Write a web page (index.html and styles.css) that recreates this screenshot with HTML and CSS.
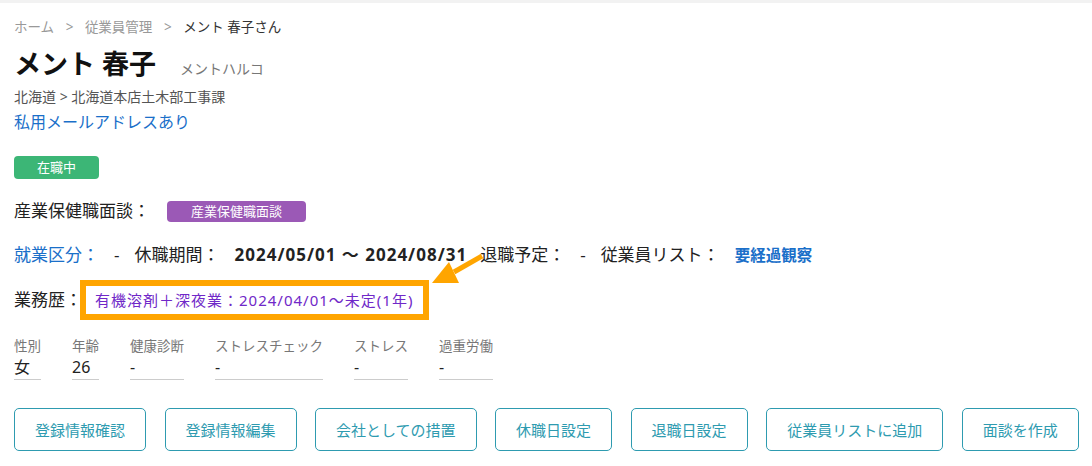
FILE: index.html
```html
<!DOCTYPE HTML>
<html>
    <head>
        <title>メント 春子さん</title>
        <link rel="stylesheet" href="styles.css">
    </head>
    <body>
        <div class="page">
            <div class="breadcrumb">
                <a href="#">ホーム</a>
                <span class="sep">&gt;</span>
                <a href="#">従業員管理</a>
                <span class="sep">&gt;</span>
                <span class="current">メント 春子さん</span>
            </div>

            <div class="name-row">
                <h1>メント 春子</h1>
                <span class="kana">メントハルコ</span>
            </div>
            <div class="org">北海道 &gt; 北海道本店土木部工事課</div>
            <a class="mail" href="#">私用メールアドレスあり</a>

            <div class="status"><span class="badge green">在職中</span></div>

            <div class="line">
                <span>産業保健職面談：</span>
                <span class="badge purple">産業保健職面談</span>
            </div>

            <div class="line info">
                <a href="#">就業区分：</a>
                <span>-</span>
                <span>休職期間：</span>
                <b class="period">2024/05/01 ～ 2024/08/31</b>
                <span>退職予定：</span>
                <span>-</span>
                <span>従業員リスト：</span>
                <b class="blue">要経過観察</b>
            </div>

            <div class="line history">
                <span>業務歴：</span>
                <span class="highlight">有機溶剤＋深夜業：2024/04/01～未定(1年)</span>
                <svg class="arrow" width="64" height="40" viewBox="0 0 64 40">
                    <line x1="58" y1="4" x2="30" y2="20" stroke="#ffa500" stroke-width="5"/>
                    <polygon points="8,31 25,10 35,31" fill="#ffa500"/>
                </svg>
            </div>

            <div class="stats">
                <div class="stat"><div class="label">性別</div><div class="value">女</div></div>
                <div class="stat"><div class="label">年齢</div><div class="value">26</div></div>
                <div class="stat"><div class="label">健康診断</div><div class="value">-</div></div>
                <div class="stat"><div class="label">ストレスチェック</div><div class="value">-</div></div>
                <div class="stat"><div class="label">ストレス</div><div class="value">-</div></div>
                <div class="stat"><div class="label">過重労働</div><div class="value">-</div></div>
            </div>

            <div class="actions">
                <button>登録情報確認</button>
                <button>登録情報編集</button>
                <button>会社としての措置</button>
                <button>休職日設定</button>
                <button>退職日設定</button>
                <button>従業員リストに追加</button>
                <button>面談を作成</button>
            </div>
        </div>
    </body>
</html>
```

FILE: styles.css
```css
body {
    margin: 0;
    font-family: "Noto Sans", "Noto Sans CJK JP", sans-serif;
    color: #222;
    background-color: white;
    border-top: 3px solid #f2f2f2;
}
.page {
    padding: 0 14px;
}
a {
    text-decoration: none;
}
.breadcrumb {
    font-size: 13.5px;
    line-height: 20px;
    padding-top: 14px;
    color: #999;
}
.breadcrumb a {
    color: #999;
}
.breadcrumb .sep {
    margin: 0 8px;
}
.breadcrumb .current {
    color: #333;
}
.name-row {
    display: flex;
    align-items: baseline;
    margin-top: 9px;
}
h1 {
    margin: 0;
    font-size: 27px;
    line-height: 36px;
    font-weight: bold;
    color: #111;
}
.kana {
    margin-left: 24px;
    font-size: 14px;
    color: #777;
}
.org {
    margin-top: 6px;
    font-size: 14px;
    line-height: 18px;
    color: #555;
}
.mail {
    display: block;
    margin-top: 5px;
    font-size: 16px;
    line-height: 22px;
    color: #1a6fc9;
}
.status {
    margin-top: 23px;
    display: flex;
}
.badge {
    display: inline-block;
    color: white;
    font-size: 13px;
    line-height: 23px;
    border-radius: 4px;
    text-align: center;
}
.green {
    background-color: #3cb676;
    width: 85px;
}
.purple {
    background-color: #9b59b6;
    width: 139px;
    line-height: 21px;
}
.line {
    display: flex;
    align-items: center;
    font-size: 17px;
    line-height: 22px;
}
.status + .line {
    margin-top: 21px;
}
.line .badge {
    margin-left: 17px;
}
.info {
    margin-top: 22px;
    gap: 15px;
}
.info a {
    color: #1a6fc9;
}
.period {
    letter-spacing: 1px;
    margin-right: -2px;
}
.blue {
    color: #1a6fc9;
    font-size: 15.5px;
}
.history {
    position: relative;
    margin-top: 14px;
}
.highlight {
    margin-left: -2px;
    border: 6px solid #ffa500;
    padding: 3px 10px 3px 9px;
    font-size: 15px;
    letter-spacing: 1px;
    line-height: 22px;
    color: #7028c8;
}
.arrow {
    position: absolute;
    left: 410px;
    top: -28px;
}
.stats {
    display: flex;
    gap: 31px;
    margin-top: 16px;
}
.stat .label {
    font-size: 13.5px;
    line-height: 20px;
    color: #777;
}
.stat .value {
    font-size: 16px;
    line-height: 23px;
    border-bottom: 1px solid #ccc;
}
.actions {
    display: flex;
    gap: 18.5px;
    margin-top: 28px;
}
.actions button {
    flex-shrink: 0;
    white-space: nowrap;
    height: 43px;
    padding: 0 20px;
    font-family: inherit;
    font-size: 15px;
    color: #2e9bb0;
    background-color: white;
    border: 1px solid #2e9bb0;
    border-radius: 5px;
    cursor: pointer;
}
```
